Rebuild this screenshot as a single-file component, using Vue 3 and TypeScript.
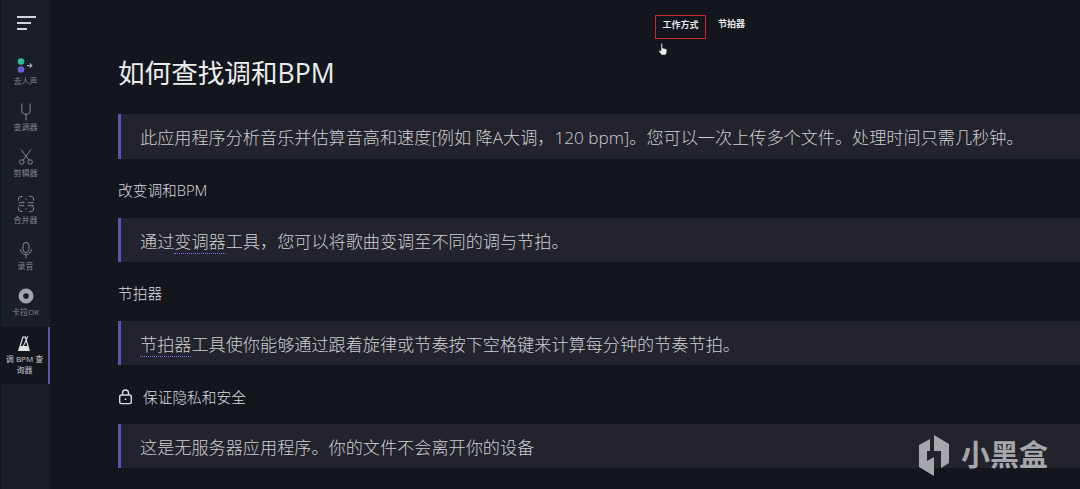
<script setup lang="ts">
interface NavItem { label: string; icon: string; active?: boolean }
const nav: NavItem[] = [
  { label: '去人声', icon: 'split' },
  { label: '变调器', icon: 'fork' },
  { label: '剪辑器', icon: 'scissors' },
  { label: '合并器', icon: 'join' },
  { label: '录音', icon: 'mic' },
  { label: '卡拉OK', icon: 'disc' },
  { label: '调 BPM 查询器', icon: 'metronome', active: true },
]
</script>

<template>
  <div class="page">
    <aside class="side">
      <div class="burger"><i class="l1"></i><i class="l2"></i><i class="l3"></i></div>
      <div v-for="n in nav" :key="n.label" class="nav" :class="[n.icon, { active: n.active }]">
        <svg class="ico" width="20" height="20" viewBox="0 0 24 24" fill="none" stroke="currentColor" stroke-width="1.2">
          <template v-if="n.icon === 'split'">
            <circle cx="6" cy="7.800" r="4" fill="#2fbf8c" stroke="none" />
            <circle cx="6" cy="17.400" r="4" fill="#6a5fd0" stroke="none" />
            <path d="M13 12.600h6M16.500 10l2.500 2.600-2.500 2.600" stroke="#a4a6ac" stroke-width="1.500" />
          </template>
          <template v-else-if="n.icon === 'fork'">
            <path d="M7 3v8a5 5 0 0 0 10 0V3M12 16v7" stroke-width="1.300" />
          </template>
          <template v-else-if="n.icon === 'scissors'">
            <circle cx="7" cy="18" r="2.700" /><circle cx="17" cy="18" r="2.700" />
            <path d="M8.500 15.800 18 3M15.500 15.800 6 3" />
          </template>
          <template v-else-if="n.icon === 'join'">
            <path d="M8 3H6a3 3 0 0 0-3 3v2M16 3h2a3 3 0 0 1 3 3v2M8 21H6a3 3 0 0 1-3-3v-2M16 21h2a3 3 0 0 0 3-3v-2" />
            <path d="M3 10.500h7l-2-2M10 14H3M21 10.500h-7M14 14h7l-2 2M12 5v2M12 17v2" />
          </template>
          <template v-else-if="n.icon === 'mic'">
            <rect x="8.500" y="3" width="7" height="12" rx="3.500" />
            <path d="M5.500 11a6.500 6.500 0 0 0 13 0M12 17.500V22" />
          </template>
          <template v-else-if="n.icon === 'disc'">
            <circle cx="12" cy="12" r="6.200" stroke-width="5.600" stroke="#a2a4ab" />
          </template>
          <template v-else>
            <path d="M9.500 5h3L17 21H4.500L9.500 5Z" stroke="#e2e3e6" stroke-width="1.400" />
            <path d="M6.500 15.500h8.700l1.800 5.500H4.500Z" fill="#e2e3e6" stroke="none" />
            <path d="M10 15.500 15.500 4" stroke="#e2e3e6" stroke-width="1.300" />
          </template>
        </svg>
        <span class="lbl">{{ n.label }}</span>
      </div>
    </aside>

    <main class="main">
      <nav class="tabs">
        <span class="tab sel">工作方式</span>
        <span class="tab">节拍器</span>
      </nav>
      <svg class="cursor" width="10" height="14" viewBox="0 0 10 14">
        <path d="M3 1.500c.8-.8 1.500 0 1.500 1V6l3 .8c1 .3 1.500.8 1.500 1.700l-.4 2.500-1 2H3.500L1 9.500c-.5-1 .5-1.500 1.200-1L3 9V1.500Z" fill="#f1f1f1" stroke="#222" stroke-width=".6" />
      </svg>

      <h1>如何查找调和BPM</h1>
      <p class="note">此应用程序分析音乐并估算音高和速度[例如 降A大调，120 bpm]。您可以一次上传多个文件。处理时间只需几秒钟。</p>
      <h2>改变调和BPM</h2>
      <p class="note">通过<span class="dot">变调器</span>工具，您可以将歌曲变调至不同的调与节拍。</p>
      <h2>节拍器</h2>
      <p class="note"><span class="dot">节拍器</span>工具使你能够通过跟着旋律或节奏按下空格键来计算每分钟的节奏节拍。</p>
      <h2 class="lock">
        <svg width="15" height="16" viewBox="0 0 15 16" fill="none" stroke="#dcdde0" stroke-width="1.400">
          <rect x="1.700" y="6" width="11.600" height="8.600" rx="1.800" />
          <path d="M4.500 6V4a3 3 0 0 1 6 0v2" />
          <circle cx="7.500" cy="10.200" r=".9" fill="#dcdde0" stroke="none" />
        </svg>
        保证隐私和安全
      </h2>
      <p class="note">这是无服务器应用程序。你的文件不会离开你的设备</p>
    </main>

    <div class="mark">
      <svg width="45" height="50" viewBox="0 0 45 50" fill="#a6a7ab">
        <path d="M19 5 34 14V33L26 38V21H19Z" />
        <path d="M4 15 15 9V21H12V31L19 27V46L4 37Z" />
      </svg>
      <span>小黑盒</span>
    </div>
  </div>
</template>

<style>
html, body { margin: 0; background: #14161e; }
</style>

<style scoped>
.page {
  width: 1080px;
  height: 489px;
  overflow: hidden;
  display: flex;
  position: relative;
  background: #14161e;
  font-family: "Open Sans", "Noto Sans CJK SC", sans-serif;
  color: #dcdde0;
}
.side {
  width: 49px;
  margin-left: 1px;
  flex: none;
  display: flex;
  flex-direction: column;
  background: #1a1e27;
}
.burger {
  display: flex;
  flex-direction: column;
  gap: 4px;
  padding: 16px 0 0 16px;
  height: 54.500px;
  box-sizing: border-box;
}
.burger i { display: block; height: 2px; background: #d4d5d8; }
.l1 { width: 19px; }
.l2 { width: 14px; }
.l3 { width: 10px; }
.nav {
  height: 31px;
  margin-bottom: 15.400px;
  display: flex;
  flex-direction: column;
  align-items: center;
  color: #85878e;
  font-size: 8px;
  line-height: 11px;
}
.ico { flex: none; }
.lbl { text-align: center; }
.nav.active {
  margin-top: -5.900px;
  height: 57px;
  margin-bottom: 0;
  padding-top: 6px;
  box-sizing: border-box;
  background: #14161e;
  border-right: 2px solid #5b52b5;
  color: #c8c9cc;
}
.nav.active .lbl { width: 42px; }
.main {
  flex: 1;
  min-width: 0;
  padding: 0 0 0 68px;
  position: relative;
}
.tabs {
  display: flex;
  margin-left: 537px;
  padding-top: 15px;
  height: 24px;
}
.tab {
  width: 51px;
  height: 24px;
  box-sizing: border-box;
  font-size: 9px;
  font-weight: 700;
  line-height: 18px;
  text-align: center;
  color: #e6e7e8;
}
.tab.sel { border: 1px solid #cf2530; }
.cursor { position: absolute; left: 608px; top: 42px; }
h1 {
  margin: 16px 0 22px;
  font-size: 26.600px;
  line-height: 37px;
  font-weight: 400;
  color: #eceded;
}
.note {
  margin: 0;
  height: 44px;
  box-sizing: border-box;
  padding-left: 19px;
  border-left: 3px solid #5b52b5;
  background: #22232c;
  font-size: 17.150px;
  font-weight: 300;
  line-height: 47px;
  color: #cfd0d3;
  white-space: nowrap;
}
.note:first-of-type { height: 45px; }
h2 {
  margin: 0;
  height: 59px;
  font-size: 14.700px;
  font-weight: 300;
  line-height: 62px;
  color: #dcdde0;
}
.lock {
  display: flex;
  align-items: center;
  gap: 10px;
  height: 59px;
  box-sizing: border-box;
  padding-top: 5px;
  line-height: 20px;
}
.dot { border-bottom: 1px dotted #7a6ef0; }
.mark {
  position: absolute;
  left: 915px;
  top: 430px;
  display: flex;
  align-items: center;
  gap: 1px;
  color: #a6a7ab;
  font-size: 29px;
  font-weight: 700;
  line-height: 50px;
}
</style>
